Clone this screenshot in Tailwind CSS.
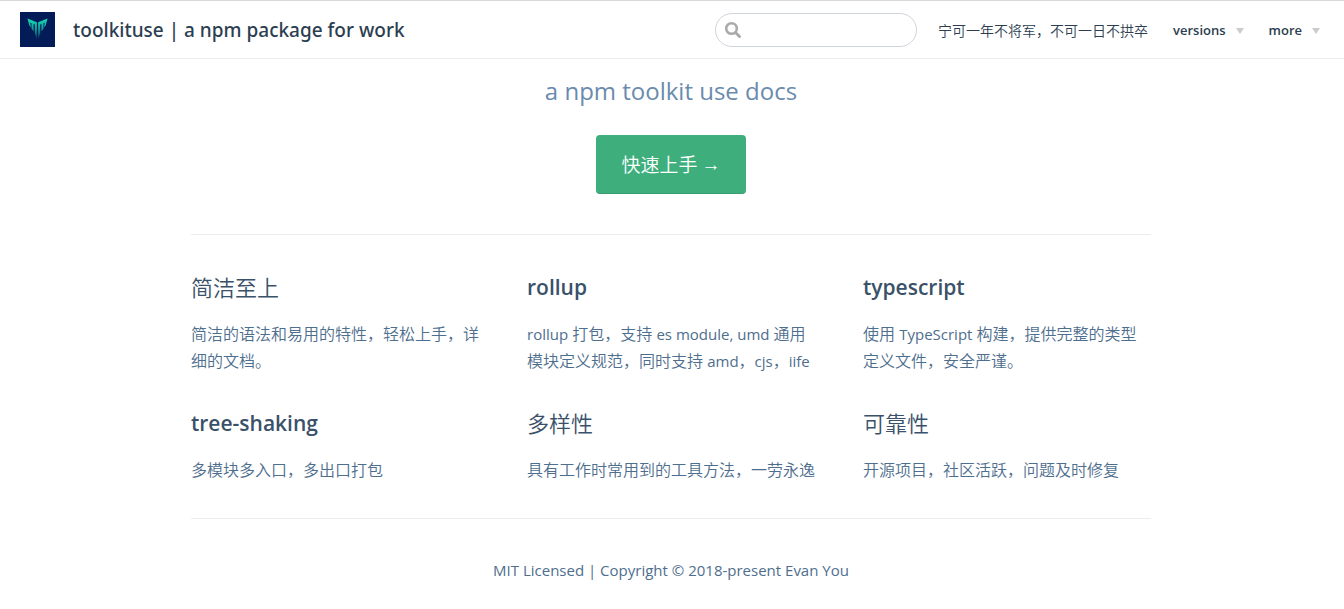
<!DOCTYPE html>
<html lang="zh-CN">
<head>
<meta charset="utf-8">
<meta name="viewport" content="width=device-width, initial-scale=1">
<title>toolkituse | a npm package for work</title>
<script src="https://cdn.jsdelivr.net/npm/@tailwindcss/browser@4"></script>
</head>
<body class="bg-white text-[#2c3e50] font-['Open_Sans','Noto_Sans_CJK_SC',sans-serif]">
<header class="flex h-[59px] items-center justify-between border-t border-b border-t-[#d8d8d8] border-b-[#eaecef] pl-5 pr-6">
  <a href="#" class="flex items-center gap-[18px]">
    <svg class="size-[35px]" viewBox="0 0 35 35" aria-hidden="true">
      <defs><linearGradient id="g" x1="0" y1="6" x2="0" y2="28" gradientUnits="userSpaceOnUse"><stop offset="0" stop-color="#12e0b8"/><stop offset=".5" stop-color="#139a96"/><stop offset="1" stop-color="#0a2a60"/></linearGradient></defs>
      <path fill="#031b57" d="M0 0h35v35H0z"/>
      <path fill="url(#g)" d="M7.500 6.500L16.900 10.300V28L14.800 21V12.500L13.600 12V19.500L11.500 16.500V11.200L10.300 10.700L11 15.500L9.300 13.500zM27.500 6.500L18.100 10.300V28L20.200 21V12.500L21.400 12V19.500L23.500 16.500V11.200L24.700 10.700L24 15.500L25.700 13.500z"/>
    </svg>
    <span class="pt-0.5 font-['Noto_Sans',sans-serif] text-[19px] font-medium">toolkituse | a npm package for work</span>
  </a>
  <div class="flex items-center">
    <label class="relative mr-[21px] block">
      <span class="sr-only">Search</span>
      <svg class="absolute left-[9px] top-[8px] size-[18px]" viewBox="0 0 18 18" fill="none" stroke="#aaa" aria-hidden="true"><circle cx="7.500" cy="7.500" r="5.300" stroke-width="2.600"/><path d="M11.500 11.500l4 4" stroke-width="3" stroke-linecap="round"/></svg>
      <input type="text" class="block h-[34px] w-[202px] rounded-full border border-[#cfd4db] pl-8 pr-2 text-sm outline-none">
    </label>
    <nav class="flex items-center gap-[25px] pt-0.5 text-[13px] font-semibold">
      <a href="#" class="text-sm font-[350]">宁可一年不将军，不可一日不拱卒</a>
      <button type="button" class="flex items-center gap-2.5">versions<svg class="h-1.5 w-2" viewBox="0 0 8 6" fill="#ccc" aria-hidden="true"><path d="M0 0h8L4 6z"/></svg></button>
      <button type="button" class="flex items-center gap-2.5">more<svg class="h-1.5 w-2" viewBox="0 0 8 6" fill="#ccc" aria-hidden="true"><path d="M0 0h8L4 6z"/></svg></button>
    </nav>
  </div>
</header>
<div class="pr-0.5">
<main class="mx-auto max-w-[960px]">
  <section class="flex flex-col items-center pt-4 pb-10">
    <p class="text-2xl leading-8 text-[#6a8bad]">a npm toolkit use docs</p>
    <a href="#" class="mt-7 flex h-[59px] items-center gap-1 rounded border-b border-[#389d70] bg-[#3eaf7c] px-[25px] pt-0.5 text-[19px] text-white font-[350]">快速上手 <span class="font-['Liberation_Sans',sans-serif]">→</span></a>
  </section>
  <section class="grid grid-cols-3 gap-x-12 gap-y-[31px] border-t border-[#eaecef] pt-[35px] pb-[34px] text-[#4e6e8e]">
    <article>
      <h2 class="text-[22px] leading-[35px] text-[#3a5169] font-[350]">简洁至上</h2>
      <p class="mt-4 leading-[27px] font-[350]">简洁的语法和易用的特性，轻松上手，详细的文档。</p>
    </article>
    <article>
      <h2 class="text-[21px] leading-[35px] font-semibold text-[#3a5169]">rollup</h2>
      <p class="mt-4 leading-[27px] font-[350]"><span class="text-[15px] font-normal">rollup</span> 打包，支持 <span class="text-[15px] font-normal">es module, umd</span> 通用模块定义规范，同时支持 <span class="text-[15px] font-normal">amd</span>，<span class="text-[15px] font-normal">cjs</span>，<span class="text-[15px] font-normal">iife</span></p>
    </article>
    <article>
      <h2 class="text-[21px] leading-[35px] font-semibold text-[#3a5169]">typescript</h2>
      <p class="mt-4 leading-[27px] font-[350]">使用 <span class="text-[15px] font-normal">TypeScript</span> 构建，提供完整的类型定义文件，安全严谨。</p>
    </article>
    <article>
      <h2 class="text-[21px] leading-[35px] font-semibold text-[#3a5169]">tree-shaking</h2>
      <p class="mt-4 leading-[27px] font-[350]">多模块多入口，多出口打包</p>
    </article>
    <article>
      <h2 class="text-[22px] leading-[35px] text-[#3a5169] font-[350]">多样性</h2>
      <p class="mt-4 leading-[27px] font-[350]">具有工作时常用到的工具方法，一劳永逸</p>
    </article>
    <article>
      <h2 class="text-[22px] leading-[35px] text-[#3a5169] font-[350]">可靠性</h2>
      <p class="mt-4 leading-[27px] font-[350]">开源项目，社区活跃，问题及时修复</p>
    </article>
  </section>
  <footer class="border-t border-[#eaecef] pt-[39px] pb-6 text-center text-[15px] leading-6 text-[#4e6e8e]">MIT Licensed | Copyright © 2018-present Evan You</footer>
</main>
</div>
</body>
</html>
